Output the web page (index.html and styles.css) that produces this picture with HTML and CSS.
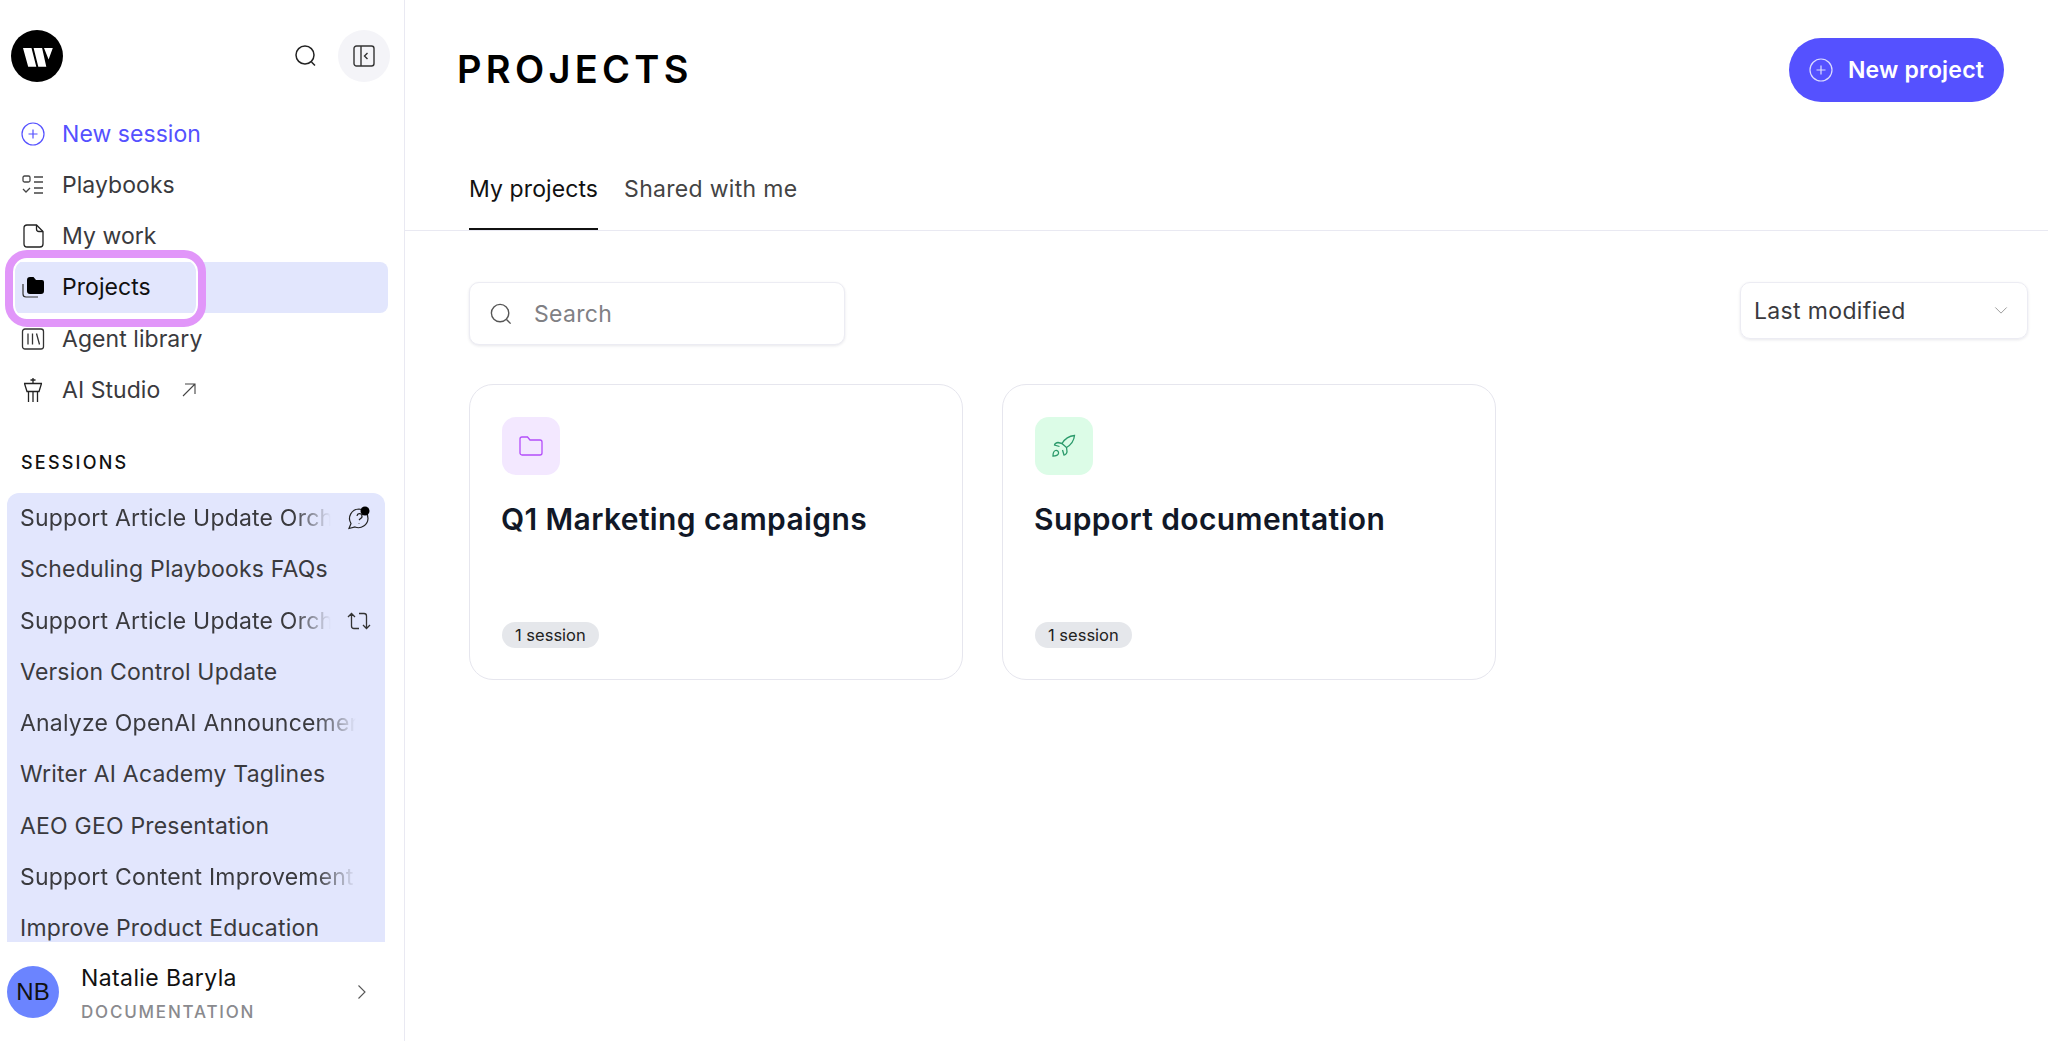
FILE: index.html
```html
<!DOCTYPE html>
<html lang="en">

<head>
    <meta charset="UTF-8">
    <meta name="viewport" content="width=device-width, initial-scale=1.0">
    <title>Projects</title>
    <link rel="stylesheet" href="styles.css">
</head>

<body>

    <aside class="sidebar">
        <div class="side-top">
            <svg class="logo" viewBox="0 0 52 52">
                <circle cx="26" cy="26" r="26" fill="#000" />
                <path fill="#fff" d="M12 18h8.500l4.800 18.700h-8.100zM22.600 18h8.500l4.200 18.700h-8zM33 18h8.800l-4.200 11.500z" />
            </svg>
            <button class="icon-btn">
                <svg width="24" height="24" viewBox="0 0 24 24" fill="none" stroke="#222" stroke-width="1.500">
                    <circle cx="11" cy="11" r="9" />
                    <path d="M17.500 18l3.500 3.500" />
                </svg>
            </button>
            <button class="collapse-btn">
                <svg width="22" height="22" viewBox="0 0 22 22" fill="none" stroke="#333" stroke-width="1.400">
                    <rect x="1" y="1" width="20" height="20" rx="2.500" />
                    <path d="M8 1v20M14.500 8l-3 3 3 3" />
                </svg>
            </button>
        </div>

        <nav class="nav">
            <a class="nav-item nav-new">
                <svg class="nav-icon" viewBox="0 0 24 24" fill="none" stroke="#5551ff" stroke-width="1.200">
                    <circle cx="12" cy="12" r="11" />
                    <path d="M12 7.500v9M7.500 12h9" />
                </svg>
                New session
            </a>
            <a class="nav-item">
                <svg class="nav-icon" viewBox="0 0 24 24" fill="none" stroke="#444" stroke-width="1.300">
                    <rect x="2" y="3" width="7" height="6" rx="1.500" />
                    <path d="M13 4h9M13 9h9M13 15h9M13 20h9M2 16l3 3 4-4" />
                </svg>
                Playbooks
            </a>
            <a class="nav-item">
                <svg class="nav-icon" viewBox="0 0 24 24" fill="none" stroke="#222" stroke-width="1.300">
                    <path d="M6 1h9.500L22 7.500V20a3 3 0 0 1-3 3H6a3 3 0 0 1-3-3V4a3 3 0 0 1 3-3z" />
                    <path d="M15.500 1v4a2.500 2.500 0 0 0 2.500 2.500h4" />
                </svg>
                My work
            </a>
            <a class="nav-item nav-active">
                <svg class="nav-icon" viewBox="0 0 24 24">
                    <path fill="none" stroke="#333" stroke-width="1.200" d="M2 9v10a3 3 0 0 0 3 3h12" />
                    <path fill="#000" d="M6 5a3 3 0 0 1 3-3h3.500l2.500 3h6a2 2 0 0 1 2 2v9a3 3 0 0 1-3 3H9a3 3 0 0 1-3-3z" />
                </svg>
                Projects
                <span class="highlight"></span>
            </a>
            <a class="nav-item">
                <svg class="nav-icon" viewBox="0 0 24 24" fill="none" stroke="#333" stroke-width="1.300">
                    <rect x="1.500" y="2" width="21" height="20" rx="2.500" />
                    <path d="M7 6.500v11M11.500 6.500v11M15.500 6.500l3 11" />
                </svg>
                Agent library
            </a>
            <a class="nav-item">
                <svg class="nav-icon" viewBox="0 0 24 24" fill="none" stroke="#222" stroke-width="1.300">
                    <path d="M12 0v5.500M9.500 2h5M3 5.500h18M3.500 5.500l2.500 8h12l2.500-8M6 13.500h12M7.500 13.500V24M12 13.500V24M16.500 13.500V24" />
                </svg>
                AI Studio
                <svg class="ext-icon" width="14" height="14" viewBox="0 0 14 14" fill="none" stroke="#444" stroke-width="1.100">
                    <path d="M1 13L13 1M3 1h10v10" />
                </svg>
            </a>
        </nav>

        <h2 class="sessions-title">SESSIONS</h2>

        <div class="sessions">
            <a class="session"><span class="session-name fade">Support Article Update Orchestration</span>
                <svg class="session-icon" viewBox="0 0 24 24" fill="none" stroke="#222" stroke-width="1.200">
                    <path d="M12 3a9.500 9.500 0 0 1 9 9.500 9.500 9.500 0 0 1-13 8.500l-6 1.500 2-5A9.500 9.500 0 0 1 12 3z" />
                    <path d="M10 10a2.500 2.500 0 1 1 3.500 2.500L12 14M12 17v.5" />
                    <circle cx="18" cy="5" r="4.500" fill="#000" stroke="none" />
                </svg>
            </a>
            <a class="session"><span class="session-name">Scheduling Playbooks FAQs</span></a>
            <a class="session"><span class="session-name fade">Support Article Update Orchestration</span>
                <svg class="session-icon" viewBox="0 0 24 24" fill="none" stroke="#333" stroke-width="1.300">
                    <path d="M1 8l3.500-3.500L8 8M4.500 4.500V17a2.500 2.500 0 0 0 2.500 2.500h5M12 4.500h5a2.500 2.500 0 0 1 2.500 2.500v12.500M16 16l3.500 3.500L23 16" />
                </svg>
            </a>
            <a class="session"><span class="session-name">Version Control Update</span></a>
            <a class="session"><span class="session-name fade-long">Analyze OpenAI Announcement Notes</span></a>
            <a class="session"><span class="session-name">Writer AI Academy Taglines</span></a>
            <a class="session"><span class="session-name">AEO GEO Presentation</span></a>
            <a class="session"><span class="session-name fade-long">Support Content Improvement Plan</span></a>
            <a class="session"><span class="session-name">Improve Product Education</span></a>
        </div>

        <div class="user">
            <div class="avatar">NB</div>
            <div class="user-info">
                <div class="user-name">Natalie Baryla</div>
                <div class="user-org">DOCUMENTATION</div>
            </div>
            <svg class="user-arrow" width="10" height="16" viewBox="0 0 10 16" fill="none" stroke="#555" stroke-width="1.100">
                <path d="M1.500 1.500L8 8l-6.500 6.500" />
            </svg>
        </div>
    </aside>

    <main class="main">
        <header class="page-head">
            <h1>PROJECTS</h1>
            <button class="new-btn">
                <svg width="24" height="24" viewBox="0 0 24 24" fill="none" stroke="#dcdcff" stroke-width="1.200">
                    <circle cx="12" cy="12" r="11" />
                    <path d="M12 7.500v9M7.500 12h9" />
                </svg>
                New project
            </button>
        </header>

        <div class="tabs">
            <a class="tab tab-active">My projects</a>
            <a class="tab">Shared with me</a>
        </div>

        <div class="toolbar">
            <label class="search">
                <svg width="22" height="22" viewBox="0 0 24 24" fill="none" stroke="#555" stroke-width="1.500">
                    <circle cx="11" cy="11" r="9.500" />
                    <path d="M18 18l4.500 4.500" />
                </svg>
                <span class="search-text">Search</span>
            </label>
            <div class="sort">
                Last modified
                <svg width="14" height="9" viewBox="0 0 16 10" fill="none" stroke="#999" stroke-width="1.100">
                    <path d="M1.500 1.500L8 8l6.500-6.500" />
                </svg>
            </div>
        </div>

        <section class="cards">
            <article class="card">
                <div class="card-icon purple">
                    <svg width="24" height="20" viewBox="0 0 24 20" fill="none" stroke="#b44dfa" stroke-width="1.300">
                        <path d="M1 3a2 2 0 0 1 2-2h5.500l2.500 3h10a2 2 0 0 1 2 2v11a2 2 0 0 1-2 2H3a2 2 0 0 1-2-2z" />
                    </svg>
                </div>
                <h3>Q1 Marketing campaigns</h3>
                <span class="badge">1 session</span>
            </article>
            <article class="card">
                <div class="card-icon green">
                    <svg width="24" height="24" viewBox="0 0 24 24" fill="none" stroke="#2b9a6b" stroke-width="1.300">
                        <path d="M22.500 1.500c-5.500.5-9.500 3-12.500 8l4.500 4c5-3 7.500-7 8-12z" />
                        <path d="M10 9.500L6 8.500c-1.500 0-3.500 1.500-3.500 2.500l5 1.500M14.500 13.500l.5 4c0 1.500-1.500 3.500-3 3.500l-1.500-5" />
                        <path d="M3.500 16.500c-1.500.5-2.500 2-2.500 5.500 3 0 5-1 5.500-2.500.5-2-1.500-3.500-3-3z" />
                    </svg>
                </div>
                <h3>Support documentation</h3>
                <span class="badge">1 session</span>
            </article>
        </section>
    </main>

</body>

</html>
```

FILE: styles.css
```css
* {
    box-sizing: border-box;
}

html,
body {
    height: 100%;
}

body {
    margin: 0;
    display: flex;
    overflow: hidden;
    font-family: "Inter", "Liberation Sans", sans-serif;
    color: #333;
    background: #fff;
}

button {
    font-family: inherit;
    border: none;
    cursor: pointer;
}

/* sidebar */
.sidebar {
    width: 405px;
    height: 1041px;
    padding: 30px 14px 0 7px;
    border-right: 1px solid #e9e9f2;
    display: flex;
    flex-direction: column;
    flex-shrink: 0;
}

.side-top {
    display: flex;
    align-items: center;
    padding-left: 4px;
    height: 52px;
    flex-shrink: 0;
}

.logo {
    width: 52px;
    height: 52px;
    margin-right: auto;
}

.icon-btn {
    background: none;
    padding: 0;
    width: 24px;
    height: 24px;
    margin-right: 20px;
}

.collapse-btn {
    width: 52px;
    height: 52px;
    border-radius: 50%;
    background: #f4f4f8;
    padding: 0;
    display: flex;
    align-items: center;
    justify-content: center;
}

.nav {
    margin: 26px 2px 0 0;
    flex-shrink: 0;
}

.nav-item {
    position: relative;
    display: flex;
    align-items: center;
    height: 51.250px;
    padding-left: 14px;
    border-radius: 8px;
    font-size: 23px;
    letter-spacing: 0.050px;
    color: #3a3a3e;
}

.nav-icon {
    width: 24px;
    height: 24px;
    margin-right: 17px;
    flex-shrink: 0;
}

.nav-new {
    color: #5551ff;
}

.nav-active {
    background: #e2e6fd;
    color: #111;
}

.highlight {
    position: absolute;
    left: -2px;
    top: -12px;
    width: 201px;
    height: 77px;
    border: 8px solid #e196f9;
    border-radius: 22px;
    box-shadow: inset 0 0 0 2px #fff;
}

.ext-icon {
    margin-left: 22px;
}

.sessions-title {
    margin: 35px 0 18px 14px;
    height: 24px;
    font-size: 18px;
    line-height: 24px;
    font-weight: 500;
    letter-spacing: 2.200px;
    color: #111;
    flex-shrink: 0;
}

.sessions {
    flex: 1;
    min-height: 0;
    margin-right: 5px;
    background: #e2e6fd;
    border-radius: 12px 12px 0 0;
    overflow: hidden;
}

.session {
    display: flex;
    align-items: center;
    height: 51.250px;
    padding: 0 14px 0 13px;
    font-size: 23px;
    letter-spacing: 0.200px;
    color: #3a3a3e;
    white-space: nowrap;
}

.session-name {
    overflow: hidden;
    flex: 1;
}

.fade {
    flex: none;
    width: 311px;
    -webkit-mask-image: linear-gradient(to right, #000 88%, transparent);
    mask-image: linear-gradient(to right, #000 88%, transparent);
}

.fade-long {
    flex: none;
    width: 336px;
    -webkit-mask-image: linear-gradient(to right, #000 88%, transparent);
    mask-image: linear-gradient(to right, #000 88%, transparent);
}

.session-icon {
    width: 24px;
    height: 24px;
    margin-left: auto;
    flex-shrink: 0;
}

.user {
    height: 99px;
    flex-shrink: 0;
    display: flex;
    align-items: center;
}

.avatar {
    width: 52px;
    height: 52px;
    border-radius: 50%;
    background: #6b84ff;
    color: #111;
    font-family: "Liberation Sans", sans-serif;
    font-size: 24px;
    display: flex;
    align-items: center;
    justify-content: center;
    flex-shrink: 0;
}

.user-info {
    margin-left: 22px;
}

.user-name {
    padding-top: 1px;
    font-size: 23px;
    line-height: 30px;
    letter-spacing: 0.400px;
    color: #111;
}

.user-org {
    margin-top: 9px;
    font-size: 17px;
    line-height: 20px;
    font-weight: 500;
    letter-spacing: 1.800px;
    color: #8a8a8e;
}

.user-arrow {
    margin-left: auto;
    margin-right: 23px;
}

/* main */
.main {
    flex: 1;
    min-width: 0;
    padding-top: 38px;
}

.page-head {
    display: flex;
    align-items: center;
    justify-content: space-between;
    height: 64px;
    padding: 0 44px 0 52px;
}

h1 {
    margin: 0 0 3px;
    font-size: 38px;
    font-weight: 600;
    letter-spacing: 4.300px;
    color: #000;
}

.new-btn {
    height: 64px;
    width: 215px;
    border-radius: 32px;
    background: #5551ff;
    color: #fff;
    font-size: 23px;
    font-weight: 600;
    letter-spacing: 0.200px;
    display: flex;
    align-items: center;
    justify-content: center;
    gap: 15px;
}

.tabs {
    display: flex;
    gap: 26px;
    margin-top: 64px;
    height: 65px;
    padding-left: 64px;
    border-bottom: 1px solid #e9e9f2;
}

.tab {
    height: 64px;
    line-height: 46px;
    font-size: 23px;
    letter-spacing: 0.300px;
    color: #444;
}

.tab-active {
    color: #111;
    letter-spacing: 0.100px;
    border-bottom: 2px solid #111;
}

.toolbar {
    display: flex;
    justify-content: space-between;
    align-items: flex-start;
    padding: 51px 20px 0 64px;
}

.search {
    width: 376px;
    height: 63px;
    padding-left: 20px;
    display: flex;
    align-items: center;
    gap: 22px;
    background: #fff;
    border: 1px solid #ececf3;
    border-radius: 10px;
    box-shadow: 0 1px 3px rgba(20, 20, 60, 0.1);
}

.search-text {
    font-size: 23px;
    letter-spacing: 0.300px;
    color: #808084;
}

.sort {
    width: 288px;
    height: 57px;
    padding: 0 19px 0 13px;
    display: flex;
    align-items: center;
    justify-content: space-between;
    font-size: 23px;
    letter-spacing: 0.350px;
    color: #3a3a3e;
    border: 1px solid #ececf3;
    border-radius: 10px;
    box-shadow: 0 1px 3px rgba(20, 20, 60, 0.1);
}

.cards {
    display: grid;
    grid-template-columns: 494px 494px;
    gap: 39px;
    margin: 39px 0 0 64px;
}

.card {
    height: 296px;
    padding: 32px 32px 31px;
    display: flex;
    flex-direction: column;
    align-items: flex-start;
    border: 1px solid #e6e6ee;
    border-radius: 24px;
}

.card-icon {
    width: 58px;
    height: 58px;
    border-radius: 14px;
    display: flex;
    align-items: center;
    justify-content: center;
}

.purple {
    background: #f3e8ff;
}

.green {
    background: #dcfce7;
}

.card h3 {
    margin: 24px 0 0 -1px;
    font-size: 30px;
    line-height: 40px;
    font-weight: 600;
    letter-spacing: 0.380px;
    color: #111827;
}

.badge {
    margin-top: auto;
    height: 26px;
    padding: 0 13px;
    line-height: 26px;
    border-radius: 13px;
    background: #e5e7eb;
    font-size: 16.500px;
    color: #222;
}
```
